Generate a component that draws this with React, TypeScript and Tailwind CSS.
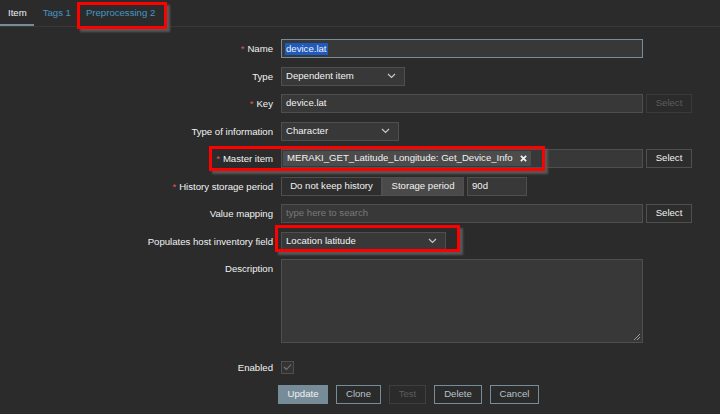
import React from "react";

const Chevron = () => (
  <svg width="9" height="6" viewBox="0 0 9 6" className="shrink-0">
    <path d="M1 1 L4.5 4.5 L8 1" fill="none" stroke="#c8c8c8" strokeWidth="1.2" />
  </svg>
);

function Label({ children, req }: { children: React.ReactNode; req?: boolean }) {
  return (
    <div className="w-[273px] shrink-0 text-right leading-[19px] whitespace-nowrap">
      {req && <span className="text-[#e45959] mr-[3px]">*</span>}
      {children}
    </div>
  );
}

function Row({ label, req, children, h = "h-[19px]", top }: { label: string; req?: boolean; children?: React.ReactNode; h?: string; top?: boolean }) {
  return (
    <div className={`flex ${top ? "items-start" : "items-center"} ${h} gap-[8px]`}>
      <Label req={req}>{label}</Label>
      <div className="flex items-center gap-[3px] h-full">{children}</div>
    </div>
  );
}

function Select({ w, text }: { w: string; text: string }) {
  return (
    <div className={`${w} h-[19px] bg-[#383838] border border-[#4f4f4f] flex items-center justify-between pl-[4px] pr-[8px]`}>
      <span className="leading-none">{text}</span>
      <Chevron />
    </div>
  );
}

function SelBtn({ disabled }: { disabled?: boolean }) {
  return (
    <div
      className={`w-[46px] h-[19px] flex items-center justify-center border ${
        disabled ? "border-[#3a3a3a] text-[#5c5c5c]" : "border-[#4f4f4f] text-[#f2f2f2] bg-[#2d2d2d]"
      }`}
    >
      Select
    </div>
  );
}

export default function App() {
  return (
    <div className="relative w-[720px] h-[414px] overflow-hidden bg-[#2b2b2b] text-[#f2f2f2] text-[9.6px] font-['Liberation_Sans',Arial,sans-serif]">
      {/* tabs */}
      <div className="flex h-[27px] border-b border-[#383838]">
        <div className="relative px-[8px] flex items-center text-[#f2f2f2]">
          Item
          <div className="absolute left-0 right-[1px] bottom-[0px] h-[2px] bg-[#768d99]" />
        </div>
        <div className="px-[8px] flex items-center text-[#4796c4]">Tags 1</div>
        <div className="px-[7px] flex items-center text-[#4796c4]">Preprocessing 2</div>
      </div>

      {/* form */}
      <div className="flex flex-col gap-[8.5px] pt-[12px]">
        <Row label="Name" req>
          <div className="w-[362px] h-[19px] bg-[#383838] border border-[#768d99] flex items-center pl-[3px]">
            <span className="bg-[#1f5bbf] leading-[12px] px-[1px]">device.lat</span>
          </div>
        </Row>
        <Row label="Type">
          <Select w="w-[124px]" text="Dependent item" />
        </Row>
        <Row label="Key" req>
          <div className="w-[362px] h-[19px] bg-[#383838] border border-[#4f4f4f] flex items-center pl-[4px]">device.lat</div>
          <SelBtn disabled />
        </Row>
        <Row label="Type of information">
          <Select w="w-[118px]" text="Character" />
        </Row>
        <Row label="Master item" req>
          <div className="w-[362px] h-[19px] bg-[#383838] border border-[#4f4f4f] flex items-center pl-[1px]">
            <div className="h-[15px] bg-[#4c4c4c] flex items-center pl-[4px] pr-[4px] gap-[7px]">
              <span>MERAKI_GET_Latitude_Longitude: Get_Device_Info</span>
              <svg width="7" height="7" viewBox="0 0 8 8">
                <path d="M1 1 L7 7 M7 1 L1 7" stroke="#f2f2f2" strokeWidth="2" />
              </svg>
            </div>
          </div>
          <SelBtn />
        </Row>
        <Row label="History storage period" req>
          <div className="flex h-[19px]">
            <div className="w-[101px] h-full border border-[#4f4f4f] bg-[#2e2e2e] flex items-center justify-center">Do not keep history</div>
            <div className="w-[82px] h-full border border-[#4f4f4f] bg-[#4a4a4a] flex items-center justify-center">Storage period</div>
          </div>
          <div className="w-[60px] h-[19px] bg-[#383838] border border-[#4f4f4f] flex items-center pl-[4px]">90d</div>
        </Row>
        <Row label="Value mapping">
          <div className="w-[362px] h-[19px] bg-[#383838] border border-[#4f4f4f] flex items-center pl-[4px] text-[#797979]">type here to search</div>
          <SelBtn />
        </Row>
        <Row label="Populates host inventory field">
          <Select w="w-[165px]" text="Location latitude" />
        </Row>
        <Row label="Description" h="h-[84px]" top>
          <div className="relative w-[362px] h-[84px] bg-[#383838] border border-[#4f4f4f]">
            <svg className="absolute right-[1px] bottom-[1px]" width="8" height="8" viewBox="0 0 8 8">
              <path d="M7 1 L1 7 M7 4 L4 7" stroke="#9a9a9a" strokeWidth="1" />
            </svg>
          </div>
        </Row>
        <div className="mt-[6px]">
          <Row label="Enabled">
            <div className="w-[13px] h-[13px] border border-[#4f4f4f] bg-[#333333] flex items-center justify-center">
              <svg width="9" height="8" viewBox="0 0 9 8">
                <path d="M1 4 L3.5 6.5 L8 1.5" fill="none" stroke="#797979" strokeWidth="1.1" />
              </svg>
            </div>
          </Row>
        </div>
        <div className="flex gap-[8px] pl-[278px] h-[19px]">
          <div className="w-[50px] h-full bg-[#768d99] flex items-center justify-center text-[#f2f2f2]">Update</div>
          <div className="w-[45px] h-full border border-[#768d99] flex items-center justify-center text-[#b7c3c9]">Clone</div>
          <div className="w-[37px] h-full border border-[#3f3f3f] flex items-center justify-center text-[#5c5c5c]">Test</div>
          <div className="w-[48px] h-full border border-[#768d99] flex items-center justify-center text-[#b7c3c9]">Delete</div>
          <div className="w-[49px] h-full border border-[#768d99] flex items-center justify-center text-[#b7c3c9]">Cancel</div>
        </div>
      </div>

      {/* red annotation boxes */}
      <div className="absolute left-[77px] top-[2px] w-[90px] h-[27px] border-[3px] border-[#ff0000] shadow-[3px_3px_2px_rgba(90,90,90,0.95)]" />
      <div className="absolute left-[209px] top-[146px] w-[336px] h-[25px] border-[3px] border-[#ff0000] shadow-[3px_3px_2px_rgba(90,90,90,0.95)]" />
      <div className="absolute left-[275px] top-[225px] w-[185px] h-[27px] border-[3px] border-[#ff0000] shadow-[3px_3px_2px_rgba(90,90,90,0.95)]" />
    </div>
  );
}
